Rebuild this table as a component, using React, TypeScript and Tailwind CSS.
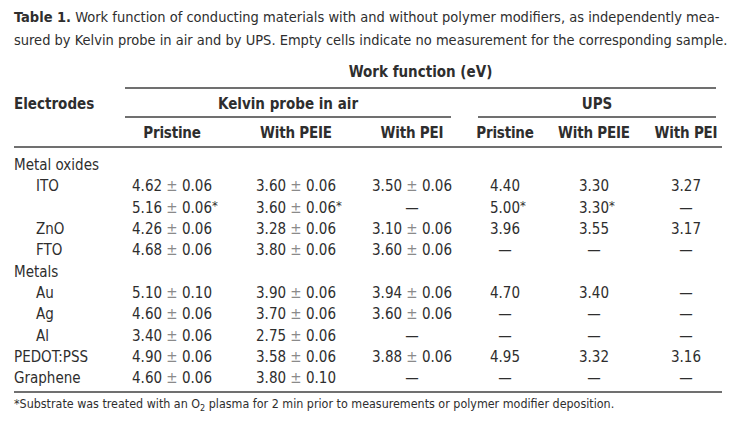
import type { ReactNode } from 'react';

const grid = 'grid grid-cols-[111px_94px_154px_78px_27px_54px_124px_60px]';

type Row = {
    label: string;
    indent?: boolean;
    cells?: [string, string, string, string, string, string];
};

const rows: Row[] = [
    { label: 'Metal oxides' },
    { label: 'ITO', indent: true, cells: ['4.62 ± 0.06', '3.60 ± 0.06', '3.50 ± 0.06', '4.40', '3.30', '3.27'] },
    { label: '', indent: true, cells: ['5.16 ± 0.06*', '3.60 ± 0.06*', '—', '5.00*', '3.30*', '—'] },
    { label: 'ZnO', indent: true, cells: ['4.26 ± 0.06', '3.28 ± 0.06', '3.10 ± 0.06', '3.96', '3.55', '3.17'] },
    { label: 'FTO', indent: true, cells: ['4.68 ± 0.06', '3.80 ± 0.06', '3.60 ± 0.06', '—', '—', '—'] },
    { label: 'Metals' },
    { label: 'Au', indent: true, cells: ['5.10 ± 0.10', '3.90 ± 0.06', '3.94 ± 0.06', '4.70', '3.40', '—'] },
    { label: 'Ag', indent: true, cells: ['4.60 ± 0.06', '3.70 ± 0.06', '3.60 ± 0.06', '—', '—', '—'] },
    { label: 'Al', indent: true, cells: ['3.40 ± 0.06', '2.75 ± 0.06', '—', '—', '—', '—'] },
    { label: 'PEDOT:PSS', cells: ['4.90 ± 0.06', '3.58 ± 0.06', '3.88 ± 0.06', '4.95', '3.32', '3.16'] },
    { label: 'Graphene', cells: ['4.60 ± 0.06', '3.80 ± 0.10', '—', '—', '—', '—'] },
];

// asterisk hangs to the right so the number itself stays centred
function Value({ text }: { text: string }) {
    const star = text.endsWith('*');
    const body = star ? text.slice(0, -1) : text;
    const parts = body.split('±');
    return (
        <span className="relative whitespace-nowrap">
            {parts.length === 2 ? (
                <>
                    {parts[0]}
                    <span className="text-[#8a8a8a]">±</span>
                    {parts[1]}
                </>
            ) : (
                body
            )}
            {star && <span className="absolute left-full top-[-3px] text-[13px]">*</span>}
        </span>
    );
}

function Cell({ children }: { children?: ReactNode }) {
    return <div className="flex justify-center whitespace-nowrap">{children}</div>;
}

export default function App() {
    return (
        <div
            className="w-[736px] h-[427px] overflow-hidden bg-white px-[14px] pt-[6px] text-[#2e2e2e]"
            style={{ fontFamily: '"DejaVu Sans Condensed", "Liberation Sans", sans-serif' }}
        >
            <p className="whitespace-nowrap text-[14.5px] leading-[23px]">
                <span className="font-bold">Table 1.</span> Work function of conducting materials with and without polymer modifiers, as independently mea-
                <br />
                sured by Kelvin probe in air and by UPS. Empty cells indicate no measurement for the corresponding sample.
            </p>

            <div className="text-[15px]">
                <div className={grid}>
                    <div />
                    <div className="col-span-7 border-b-2 border-[#707070] pt-[10px] pb-[5px] text-center font-bold leading-[20px]">
                        Work function (eV)
                    </div>
                </div>

                <div className={grid}>
                    <div className="pt-[5px] font-bold leading-[20px]">Electrodes</div>
                    <div className="col-span-3 border-b-2 border-[#707070] pt-[5px] pb-[2px] text-center font-bold leading-[20px]">
                        Kelvin probe in air
                    </div>
                    <div />
                    <div className="col-span-3 border-b-2 border-[#707070] pt-[5px] pb-[2px] text-center font-bold leading-[20px]">
                        UPS
                    </div>
                </div>

                <div className={`${grid} border-b-2 border-[#707070] pt-[5px] pb-[3px] font-bold leading-[20px] tracking-[-0.2px]`}>
                    <div />
                    <Cell>Pristine</Cell>
                    <Cell>With PEIE</Cell>
                    <Cell>With PEI</Cell>
                    <div />
                    <Cell>Pristine</Cell>
                    <Cell>With PEIE</Cell>
                    <Cell>With PEI</Cell>
                </div>

                <div className="border-b-2 border-[#707070] pt-[7px] pb-[2px]">
                    {rows.map((row, i) => (
                        <div key={i} className={`${grid} h-[21.3px] items-center leading-[21px]`}>
                            <div className={row.indent ? 'pl-[22px]' : ''}>{row.label}</div>
                            {row.cells ? (
                                <>
                                    <Cell><Value text={row.cells[0]} /></Cell>
                                    <Cell><Value text={row.cells[1]} /></Cell>
                                    <Cell><Value text={row.cells[2]} /></Cell>
                                    <div />
                                    <Cell><Value text={row.cells[3]} /></Cell>
                                    <Cell><Value text={row.cells[4]} /></Cell>
                                    <Cell><Value text={row.cells[5]} /></Cell>
                                </>
                            ) : null}
                        </div>
                    ))}
                </div>
            </div>

            <p className="whitespace-nowrap pt-[2px] text-[12.4px] leading-[18px]">
                *Substrate was treated with an O<sub className="text-[9px]">2</sub> plasma for 2 min prior to measurements or polymer modifier deposition.
            </p>
        </div>
    );
}
